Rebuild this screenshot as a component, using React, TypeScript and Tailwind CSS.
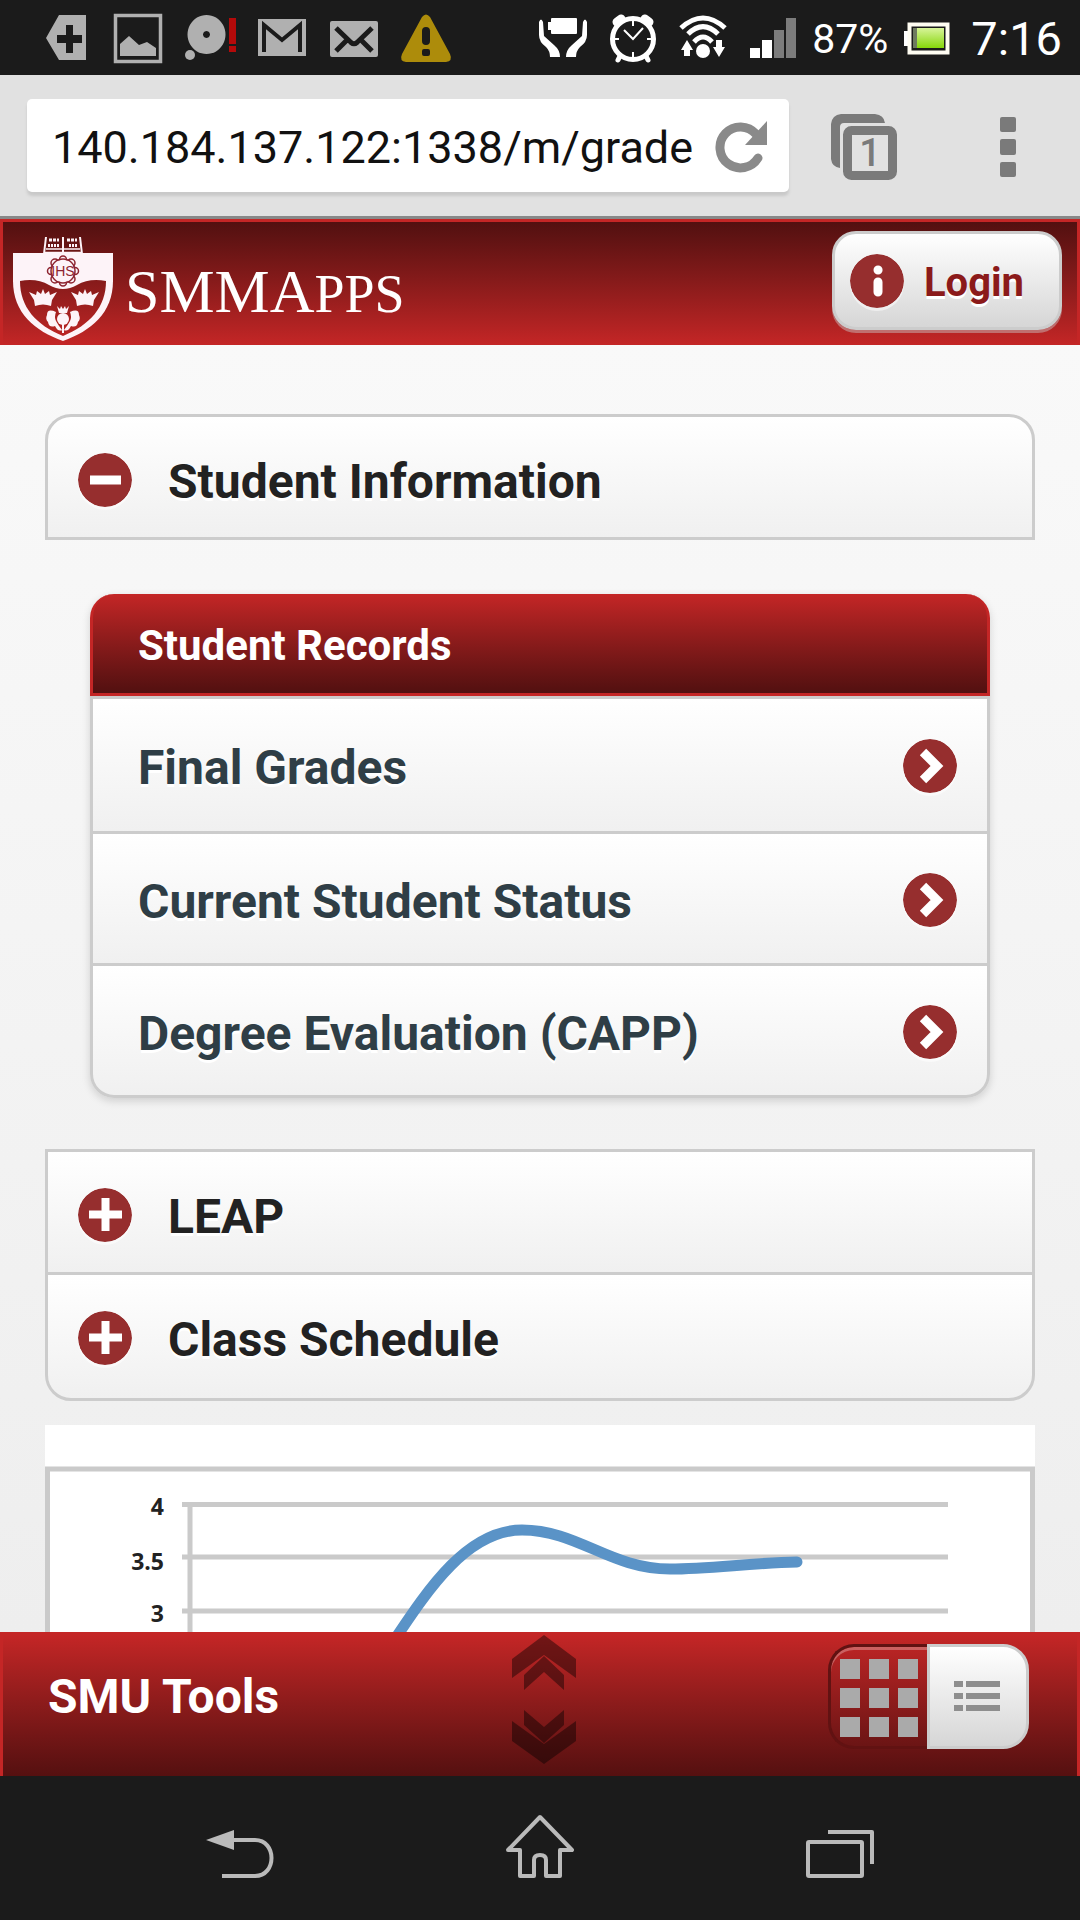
import React from "react";

const roboto = "font-['Roboto','Liberation_Sans',sans-serif]";

function StatusIcon({ children, label }: { children: React.ReactNode; label: string }) {
  return (
    <svg width="48" height="48" viewBox="0 0 48 48" role="img" aria-label={label} className="shrink-0 overflow-visible">
      {children}
    </svg>
  );
}

function StatusBar() {
  return (
    <header className="flex h-[75px] items-center justify-between bg-[#1b1b1b] pr-[18px] pl-[42px] text-white">
      <div className="flex items-center gap-6">
        <StatusIcon label="Tag">
          <path fill="#b0b0b0" fillRule="evenodd" d="M17 1h27v45H17L4 24zM24 11v10h-9v8h9v10h7V29h9v-8h-9V11z" />
        </StatusIcon>
        <StatusIcon label="Picture">
          <rect x="1.5" y="1.5" width="45" height="46" fill="none" stroke="#b0b0b0" strokeWidth="3.5" />
          <path fill="#b0b0b0" d="M6 42V30l9-8 10 9 8-3 9 6v8z" />
        </StatusIcon>
        <StatusIcon label="Voice message">
          <path fill="#b0b0b0" fillRule="evenodd" d="M20.500 1a19 19.500 0 1 0 .01 0zM20.500 17a3.500 3.500 0 1 1-.01 0z" />
          <circle cx="4" cy="41" r="5" fill="#b0b0b0" />
          <path fill="#b40a0a" d="M43 4h7v26h-7zM43 32h7v6h-7z" />
        </StatusIcon>
        <StatusIcon label="Gmail">
          <rect x="0" y="5" width="48" height="37" fill="#b0b0b0" />
          <path fill="none" stroke="#1b1b1b" strokeWidth="4" d="M6 38V11L24 26 42 11V38" />
        </StatusIcon>
        <StatusIcon label="Mail">
          <rect x="0" y="7" width="48" height="36" rx="2" fill="#b0b0b0" />
          <path fill="none" stroke="#1b1b1b" strokeWidth="5" d="M6 14 21 28.500q3 2.500 6 0L42 14M6 37 17 26M42 37 31 26" />
        </StatusIcon>
        <StatusIcon label="Warning">
          <path
            fill="#ad8c0b"
            fillRule="evenodd"
            d="M20 3q4-5 8 0L48 40q3 7-4 8H4q-7-1-4-8zM24 13q-4 0-4 4v10q0 4 4 4t4-4V17q0-4-4-4zM22 35q-2 0-2 2v3q0 2 2 2h4q2 0 2-2v-3q0-2-2-2z"
          />
        </StatusIcon>
      </div>
      <div className={`flex items-center gap-[20px] ${roboto}`}>
        <div className="flex items-center gap-[15px]">
          <div className="flex items-center gap-[22px]">
            <StatusIcon label="Stamina mode">
              <rect x="12" y="4" width="26" height="16" rx="1" fill="#fff" />
              <path fill="#fff" d="M9 8h4v8H9zM0 8q2-5 4 0l1 14 10 9q6 5 6 12H11q0-6-4-10-7-5-7-12zM48 8q-2-5-4 0l-1 14-10 9q-6 5-6 12h10q0-6 4-10 7-5 7-12z" />
            </StatusIcon>
            <StatusIcon label="Alarm">
              <circle cx="24" cy="25" r="20.500" fill="none" stroke="#fff" strokeWidth="5" />
              <path stroke="#fff" strokeWidth="9" strokeLinecap="round" d="m8 8 4-3M40 8l-4-3" />
              <path stroke="#fff" strokeWidth="5" strokeLinecap="round" d="m11 42-2 4M37 42l2 4" />
              <path fill="none" stroke="#fff" strokeWidth="2" d="M15 16l9 9 10-11M24 7v5M24 38v5M5 25h5M38 25h5" />
            </StatusIcon>
            <StatusIcon label="Wi-Fi">
              <path fill="none" stroke="#fff" strokeWidth="5" d="M2 14Q24-6 46 14M9 20Q24 5 39 20M15 28Q24 18 33 28" />
              <circle cx="24" cy="37" r="7" fill="#fff" />
              <path fill="#fff" d="M8 26l6 10h-3v6H5v-6H2zM40 43l6-10h-3v-7h-6v7h-3z" />
            </StatusIcon>
            <StatusIcon label="Signal">
              <path fill="#fff" d="M1 34h10v10H1zM13 26h10v18H13z" />
              <path fill="#7c7c7c" d="M25 16h10v28H25zM37 4h10v40H37z" />
            </StatusIcon>
          </div>
          <span className="pt-[2px] text-[41px] leading-[48px]">87%</span>
          <svg width="48" height="48" viewBox="0 0 48 48" role="img" aria-label="Battery" className="shrink-0">
            <defs>
              <linearGradient id="cell" x1="0" y1="0" x2="0" y2="1">
                <stop offset="0" stopColor="#d8f49a" />
                <stop offset="1" stopColor="#86d60a" />
              </linearGradient>
            </defs>
            <path fill="#fff" d="M1 17h4v15H1z" />
            <rect x="6.500" y="10.500" width="38" height="28" fill="#1b1b1b" stroke="#fffdf2" strokeWidth="4" />
            <rect x="10" y="14" width="5" height="20" fill="#6e7a60" />
            <rect x="14" y="14" width="27" height="20" fill="url(#cell)" />
          </svg>
        </div>
        <span className="pt-[2px] text-[47px] leading-[48px]">7:16</span>
      </div>
    </header>
  );
}

function BrowserBar() {
  return (
    <form className="flex h-[144px] items-center border-b-3 border-[#888] bg-[#e1e1e1] pr-[45px] pl-[27px]" onSubmit={(e) => e.preventDefault()}>
      <div className="flex h-[93px] min-w-0 flex-1 items-center rounded-[5px] bg-white pr-[21px] pl-[25px] shadow-[0_4px_3px_#c9c9c9]">
        <input
          type="text"
          aria-label="Address"
          defaultValue="140.184.137.122:1338/m/grade"
          className={`min-w-0 flex-1 bg-transparent pt-[4px] text-[45px] leading-[60px] text-[#111] outline-none ${roboto}`}
        />
        <button type="button" aria-label="Reload" className="ml-3 shrink-0">
          <svg width="54" height="54" viewBox="0 0 54 54">
            <path fill="none" stroke="#8a8a8a" strokeWidth="9" strokeLinecap="round" d="M44 39A20.500 20.500 0 1 1 42 15" />
            <path fill="#8a8a8a" d="M53 2v24H31z" />
          </svg>
        </button>
      </div>
      <button type="button" aria-label="Open tabs" className="ml-[42px] shrink-0 pt-[2px]">
        <svg width="66" height="66" viewBox="0 0 66 66">
          <path fill="#7a7a7a" d="M10 0h34q9 1 10 9H13q-4 0-4 4v41q-8-1-9-9V10Q1 1 10 0z" />
          <rect x="16.500" y="16.500" width="45" height="45" rx="4" fill="none" stroke="#7a7a7a" strokeWidth="9" />
          <text x="39" y="52" textAnchor="middle" fontSize="38" fontFamily="Roboto, sans-serif" fontWeight="500" fill="#7a7a7a">1</text>
        </svg>
      </button>
      <button type="button" aria-label="Menu" className="ml-[84px] shrink-0 pt-[2px]">
        <svg width="54" height="62" viewBox="0 0 54 62" fill="#7a7a7a">
          <rect x="19" y="1" width="16" height="15" rx="2" />
          <rect x="19" y="23" width="16" height="16" rx="2" />
          <rect x="19" y="46" width="16" height="15" rx="2" />
        </svg>
      </button>
    </form>
  );
}

function Crest() {
  return (
    <svg width="100" height="104" viewBox="0 0 100 104" role="img" aria-label="University crest" className="shrink-0">
      <g fill="none" stroke="#fdf3f8" strokeWidth="1.500">
        <path strokeWidth="2" d="M33 0 31 17M67 0l2 17M50 0v17" />
        <path d="M33 12h34M32 15.500h36" />
        <path strokeWidth="3" strokeDasharray="3 1" d="M36 3h10M54 3h10" />
        <path strokeWidth="3" strokeDasharray="2 1" d="M35 8.500h12M56 8.500h9" />
      </g>
      <path
        fill="#fdf3f8"
        fillRule="evenodd"
        d="M0 16h100v28C100 76 78 94 50 104 22 94 0 76 0 44zM7 44c0 26 16 44 43 55 27-11 43-29 43-55q-17-3-29 4-14 8-28 0-12-7-29-4z"
      />
      <g fill="none" stroke="#8d2430" strokeWidth="1.500">
        <circle cx="50" cy="34" r="12" />
        <circle cx="50" cy="22.500" r="3.500" />
        <circle cx="58" cy="26" r="4" />
        <circle cx="62" cy="34" r="3.500" />
        <circle cx="58" cy="42" r="4" />
        <circle cx="50" cy="45.500" r="3.500" />
        <circle cx="42" cy="42" r="4" />
        <circle cx="38" cy="34" r="3.500" />
        <circle cx="42" cy="26" r="4" />
      </g>
      <circle cx="50" cy="34" r="11" fill="#fdf3f8" />
      <text x="50" y="39" textAnchor="middle" fontSize="14" fontFamily="Liberation Sans, sans-serif" fill="#8d2430">IHS</text>
      <g fill="#fdf3f8">
        <path d="M16 55l7 3 1-4 4 3 2-5 2 5 4-3 1 4 7-3-5 8-1 6q-8-3-16 0l-1-6z" />
        <path d="M58 55l7 3 1-4 4 3 2-5 2 5 4-3 1 4 7-3-5 8-1 6q-8-3-16 0l-1-6z" />
        <path d="M44 69l3 3 1-3 2 3 2-3 1 3 3-3-2 7h-8z" />
        <circle cx="50" cy="82" r="6" />
        <path d="M49 87h2v9h-2zM43 75q-9-4-9 3-2 4 1 7 1 6 7 4 3 6 7 4-4-5-6-9-2-4 0-9zM57 75q9-4 9 3 2 4-1 7-1 6-7 4-3 6-7 4 4-5 6-9 2-4 0-9z" />
      </g>
    </svg>
  );
}

type Glyph = "minus" | "plus" | "right" | "info";

const glyphs: Record<Glyph, React.ReactNode> = {
  minus: <path strokeWidth="9" d="M12 27h31" />,
  plus: <path strokeWidth="8" d="M11 26.500h33M27.500 10v33" />,
  right: <path strokeWidth="9" d="m20 13 14 14-14 14" />,
  info: <path strokeWidth="9" strokeLinecap="round" d="M28 16h.1M28 28v10" />,
};

function Disc({ glyph }: { glyph: Glyph }) {
  return (
    <svg width="54" height="54" viewBox="0 0 54 54" aria-hidden="true" className="shrink-0 rounded-full shadow-[0_3px_0_rgba(255,255,255,0.5)]">
      <circle cx="27" cy="27" r="27" fill="#962e2e" />
      <g fill="none" stroke="#fff">{glyphs[glyph]}</g>
    </svg>
  );
}

function AppHeader() {
  return (
    <div className="flex h-[126px] justify-between border-x-3 border-t-3 border-[#c42626] bg-linear-to-b from-[#521010] to-[#c42626] pt-[9px] pr-[15px] pl-[10px]">
      <div className="flex pt-[6px]">
        <Crest />
        <h1 className="pt-[18px] pl-[12px] font-['Liberation_Serif',serif] text-[62px] leading-[72px] text-white">
          SMMA<span className="text-[54px] uppercase">pps</span>
        </h1>
      </div>
      <button
        type="button"
        className="flex h-[99px] items-center gap-[20px] rounded-[24px] border-3 border-[#ccc] bg-linear-to-b from-white to-[#d6d6d6] pr-[35px] pl-[15px] shadow-[0_3px_0_rgba(204,204,204,0.45)]"
      >
        <Disc glyph="info" />
        <span className={`pt-[5px] text-[40px] leading-[48px] font-bold text-[#8b1a1a] [text-shadow:0_3px_0_#fff] ${roboto}`}>Login</span>
      </button>
    </div>
  );
}

const faceGradient = "bg-linear-to-b from-white to-[#f0f0f0]";
const rowText = "text-[48px] leading-[60px] font-bold [text-shadow:0_3px_0_#fff]";

function Fold({ title, open, className }: { title: string; open?: boolean; className: string }) {
  return (
    <h2 className={`flex border-3 border-[#ccc] ${faceGradient} ${className}`}>
      <button type="button" aria-expanded={!!open} className={`flex h-[120px] flex-1 items-center gap-[36px] pt-[6px] pl-[30px] text-left text-[#222] ${rowText}`}>
        <Disc glyph={open ? "minus" : "plus"} />
        <span className="pt-[4px]">{title}</span>
      </button>
    </h2>
  );
}

const records = ["Final Grades", "Current Student Status", "Degree Evaluation (CAPP)"];

function Records() {
  return (
    <section className="mx-[45px] mt-[54px] mb-[51px] rounded-[24px] shadow-[0_3px_9px_rgba(0,0,0,0.15)]">
      <h3 className="flex h-[102px] items-center rounded-t-[24px] border-x-3 border-b-3 border-[#c42626] bg-linear-to-b from-[#c42626] to-[#521010] pt-[5px] pl-[45px] text-[42px] leading-[54px] font-bold text-white">
        Student Records
      </h3>
      <ul>
        {records.map((name) => (
          <li key={name} className={`group border-x-3 border-t-3 border-[#ccc] last:rounded-b-[24px] last:border-b-3 ${faceGradient}`}>
            <a href="#record" className={`flex h-[129px] items-center justify-between pt-[2px] pr-[30px] pl-[45px] text-[#2f3e46] group-first:h-[132px] ${rowText}`}>
              <span className="pt-[4px]">{name}</span>
              <Disc glyph="right" />
            </a>
          </li>
        ))}
      </ul>
    </section>
  );
}

function GradeChart() {
  return (
    <svg viewBox="0 0 990 207" role="img" aria-label="Grade point average" className="mt-6 block h-auto w-full bg-white">
      <path fill="none" stroke="#cacaca" strokeWidth="5" d="M2.500 207V44h985V207" />
      <path fill="none" stroke="#cacaca" strokeWidth="5" d="M137 79.500H903M137 132H903M137 186H903M145 79V207" />
      <path fill="none" stroke="#5a93c7" strokeWidth="11" strokeLinecap="round" d="M350 214C384 163 423 105 477 105C533 105 565 144 625 144C665 144 705 138 752 137" />
      <g fontFamily="Open Sans, Noto Sans, sans-serif" fontSize="23" fontWeight="700" fill="#222" textAnchor="end">
        <text x="119" y="90">4</text>
        <text x="119" y="145">3.5</text>
        <text x="119" y="197">3</text>
      </g>
    </svg>
  );
}

function ToolBar() {
  return (
    <footer className="grid h-[144px] shrink-0 grid-cols-3 items-start border-x-3 border-t-3 border-[#c42626] bg-linear-to-b from-[#c42626] to-[#551010]">
      <h2 className="pt-[32px] pl-[45px] text-[48px] leading-[60px] font-bold text-white">SMU Tools</h2>
      <button type="button" aria-label="Expand tools" className="justify-self-center pl-[7px]">
        <svg width="64" height="130" viewBox="0 0 64 130" fill="#000" fillOpacity="0.42">
          <path d="M32 0 64 24V43L32 20 0 43V24zM32 21 52 40V55L32 37 12 55V40z" />
          <path d="M32 129 64 106V86L32 109 0 86V106zM32 108 52 90V75L32 92 12 75V90z" />
        </svg>
      </button>
      <div className="mt-[9px] mr-[48px] flex h-[105px] justify-self-end">
        <button type="button" aria-label="Grid view" aria-pressed="true" className="rounded-l-[26px] border-3 border-r-0 border-[#611212] pt-[2px] pr-[9px] pl-[9px] shadow-[inset_0_3px_0_rgba(255,255,255,0.28)]">
          <svg width="78" height="78" viewBox="0 0 78 78" fill="#aaa">
            <path d="M0 0h20v20H0zM29 0h20v20H29zM58 0h20v20H58zM0 29h20v20H0zM29 29h20v20H29zM58 29h20v20H58zM0 58h20v20H0zM29 58h20v20H29zM58 58h20v20H58z" />
          </svg>
        </button>
        <button type="button" aria-label="List view" aria-pressed="false" className="rounded-r-[26px] border-3 border-[#ccc] bg-linear-to-b from-white to-[#d6d6d6] px-[24px]">
          <svg width="48" height="32" viewBox="0 0 48 32" fill="#8e8e8e">
            <path d="M0 0h9v6H0zM12 0h34v6H12zM0 12h9v6H0zM12 12h34v6H12zM0 24h9v6H0zM12 24h34v6H12z" />
          </svg>
        </button>
      </div>
    </footer>
  );
}

function NavBar() {
  return (
    <nav className="flex h-[144px] shrink-0 items-center justify-center gap-[232px] bg-[#1b1b1b]">
      <button type="button" aria-label="Back">
        <svg width="68" height="68" viewBox="0 0 68 68">
          <path fill="#bababa" d="M0 26 28 16V36z" />
          <path fill="none" stroke="#bababa" strokeWidth="4" d="M27 26H49C71 26 71 62 49 62H16" />
        </svg>
      </button>
      <button type="button" aria-label="Home">
        <svg width="68" height="68" viewBox="0 0 68 68" fill="none" stroke="#bababa" strokeWidth="4" strokeLinejoin="round">
          <path d="M34 3 66 36H54V62H40V46Q40 41 34 41T28 46V62H14V36H2z" />
        </svg>
      </button>
      <button type="button" aria-label="Recent apps">
        <svg width="68" height="68" viewBox="0 0 68 68" fill="none" stroke="#bababa" strokeWidth="4">
          <rect x="2" y="28" width="54" height="34" rx="1" />
          <path d="M22 18H66V50" strokeLinejoin="round" />
        </svg>
      </button>
    </nav>
  );
}

export default function App() {
  return (
    <div className={`flex min-h-screen flex-col bg-[#1b1b1b] ${roboto}`}>
      <StatusBar />
      <BrowserBar />
      <AppHeader />
      <main className="flex-1 bg-linear-to-b from-[#f9f9f9] to-[#eee] px-[45px] pt-[69px]">
        <Fold title="Student Information" open className="rounded-t-[26px]" />
        <Records />
        <Fold title="LEAP" className="border-b-0" />
        <Fold title="Class Schedule" className="rounded-b-[26px] pb-[3px]" />
        <GradeChart />
      </main>
      <ToolBar />
      <NavBar />
    </div>
  );
}
